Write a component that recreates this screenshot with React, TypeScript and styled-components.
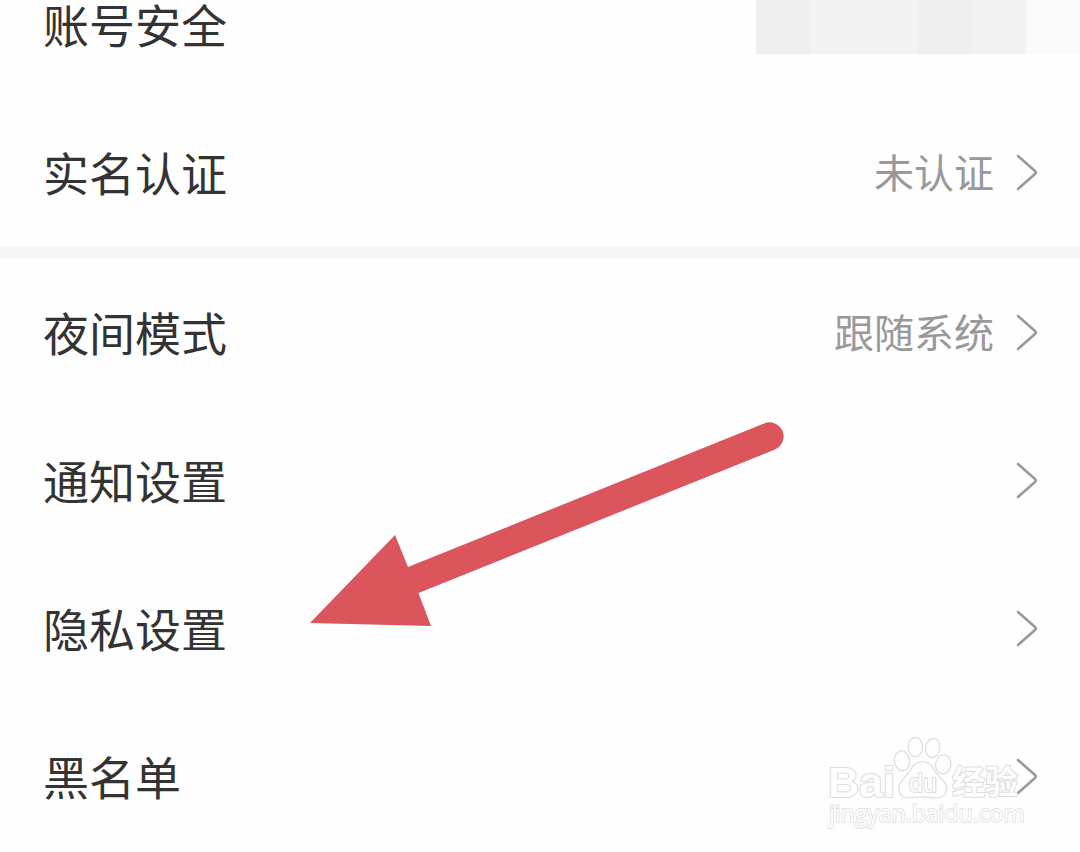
import styled, { createGlobalStyle } from 'styled-components';

const GlobalStyle = createGlobalStyle`
  * {
    box-sizing: border-box;
  }
  body {
    margin: 0;
    background: #fefefe;
    font-family: "Noto Sans CJK SC", sans-serif;
  }
`;

const Page = styled.main`
  position: relative;
  overflow: hidden;
`;

/* The list is scrolled so that its first row is partly out of view. */
const Settings = styled.div`
  margin-top: -49px;
`;

const Section = styled.section`
  & + & {
    border-top: 12px solid #f7f7f7;
  }
`;

const Row = styled.button`
  display: flex;
  align-items: center;
  width: 100%;
  height: 148px;
  padding: 0 41px 0 43px;
  border: 0;
  background: transparent;
  font-family: inherit;
  text-align: left;
  cursor: pointer;
`;

const Label = styled.span`
  flex: 1;
  padding-bottom: 4px;
  color: #333;
  font-size: 46px;
  line-height: 68px;
`;

const Value = styled.span`
  margin-right: 19px;
  padding-bottom: 4px;
  color: #999;
  font-size: 40px;
  line-height: 60px;
`;

const ChevronIcon = styled.svg`
  flex: none;
  width: 26px;
  height: 40px;
  fill: none;
  stroke: #999;
  stroke-width: 2.6;
  stroke-linecap: round;
  stroke-linejoin: round;
`;

const Mosaic = styled.div`
  position: absolute;
  top: 0;
  right: 0;
  display: flex;
`;

const Tile = styled.span<{ $shade: string }>`
  width: 54px;
  height: 54px;
  background: ${(p) => p.$shade};
`;

const Arrow = styled.svg`
  position: absolute;
  top: 420px;
  left: 308px;
  width: 480px;
  height: 210px;
  fill: #db565c;
  pointer-events: none;
`;

const Watermark = styled.svg`
  position: absolute;
  right: 50px;
  bottom: 19px;
  width: 210px;
  height: 100px;
  fill: #fefefe;
  stroke: #dcdcdc;
  stroke-width: 2;
  stroke-linejoin: round;
  pointer-events: none;

  text {
    paint-order: stroke;
  }
`;

type Item = { label: string; value?: string; masked?: boolean };

const sections: Item[][] = [
  [{ label: '账号安全', masked: true }, { label: '实名认证', value: '未认证' }],
  [
    { label: '夜间模式', value: '跟随系统' },
    { label: '通知设置' },
    { label: '隐私设置' },
    { label: '黑名单' },
  ],
];

const shades = ['#efefef', '#f3f3f3', '#f3f3f3', '#eeeeee', '#f2f2f2', '#fafafa'];

const Chevron = () => (
  <ChevronIcon viewBox="0 0 26 40" aria-hidden="true">
    <path d="M5 3 L22 18 Q23.600 19.500 22 21 L5 36" />
  </ChevronIcon>
);

const BaiduMark = () => (
  <Watermark viewBox="0 0 210 100" aria-hidden="true">
    <text x="8" y="65" fontFamily="Liberation Sans, sans-serif" fontWeight="700" fontSize="43">
      Bai
    </text>
    <g strokeWidth="1.2">
      <ellipse cx="82" cy="28.7" rx="7.6" ry="10" transform="rotate(-8 82 28.7)" />
      <ellipse cx="95.3" cy="15" rx="7.2" ry="9.7" />
      <ellipse cx="112.7" cy="16" rx="7.2" ry="9.5" transform="rotate(10 112.7 16)" />
      <ellipse cx="123.3" cy="32.3" rx="7.7" ry="9.5" transform="rotate(8 123.3 32.3)" />
      <path d="M102.300 29.500 C97 29.500 93.500 32.500 91 37 C88 42 85 45 82 48.500 C79.500 51.500 78.500 54 78.700 57 C79.200 62.500 83 66 88 66 C93 66 97 64.800 102.500 64.800 C108 64.800 112 66 117 66 C122.500 66 126.200 62.500 126.600 57 C126.800 53.500 125.500 51 123 48.500 C119.500 45 116.500 42 113.500 37 C111 32.500 107.500 29.500 102.300 29.500 Z" />
    </g>
    <text x="89" y="60" fontFamily="Liberation Sans, sans-serif" fontWeight="400" fontSize="25">
      du
    </text>
    <text x="132" y="62" fontFamily="Noto Sans CJK SC, sans-serif" fontWeight="700" fontSize="33">
      经验
    </text>
    <text x="9" y="90" fontFamily="Open Sans, sans-serif" fontSize="23" strokeWidth="1.5">
      jingyan.baidu.com
    </text>
  </Watermark>
);

export default function App() {
  return (
    <Page>
      <GlobalStyle />
      <Settings>
        {sections.map((items, i) => (
          <Section key={i}>
            {items.map((item) => (
              <Row key={item.label} type="button">
                <Label>{item.label}</Label>
                {item.value && <Value>{item.value}</Value>}
                {!item.masked && <Chevron />}
              </Row>
            ))}
          </Section>
        ))}
      </Settings>
      <Mosaic aria-hidden="true">
        {shades.map((shade, i) => (
          <Tile key={i} $shade={shade} />
        ))}
      </Mosaic>
      <Arrow viewBox="308 420 480 210" aria-hidden="true">
        <path d="M310 623 L395 535 L408 567 L764 423.500 A14 14 0 0 1 775 449.500 L418.500 593 L431 626 Z" />
      </Arrow>
      <BaiduMark />
    </Page>
  );
}
